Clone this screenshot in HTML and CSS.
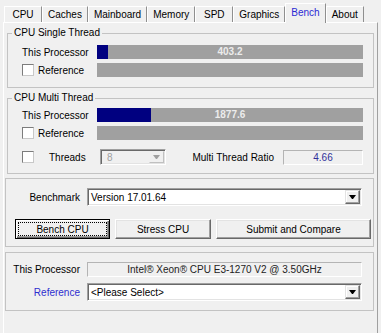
FILE: index.html
```html
<!DOCTYPE html>
<html lang="en">
  <head>
    <meta charset="UTF-8" />
    <meta name="viewport" content="width=device-width, initial-scale=1.0" />
    <title>CPU-Z Bench</title>
    <link rel="stylesheet" href="styles.css">
  </head>
  <body>
    <div class="tabs">
      <div class="tab">CPU</div>
      <div class="tab">Caches</div>
      <div class="tab">Mainboard</div>
      <div class="tab">Memory</div>
      <div class="tab">SPD</div>
      <div class="tab">Graphics</div>
      <div class="tab active">Bench</div>
      <div class="tab">About</div>
    </div>

    <div class="panel">
      <fieldset class="group">
        <legend>CPU Single Thread</legend>
        <div class="graph single">
          <span>This Processor</span>
          <div class="bar">
            <div class="fill" style="width: 4.1%"></div>
            <span class="value">403.2</span>
          </div>
          <span class="check"><span class="box"></span>Reference</span>
          <div class="bar"></div>
        </div>
      </fieldset>

      <fieldset class="group">
        <legend>CPU Multi Thread</legend>
        <div class="graph multi">
          <span>This Processor</span>
          <div class="bar">
            <div class="fill" style="width: 20.3%"></div>
            <span class="value">1877.6</span>
          </div>
          <span class="check"><span class="box"></span>Reference</span>
          <div class="bar"></div>
        </div>
        <div class="threads">
          <span class="box"></span>
          <span class="threads-label">Threads</span>
          <div class="combo disabled sunken">
            <span class="combo-text">8</span>
            <span class="drop"></span>
          </div>
          <span class="ratio-label">Multi Thread Ratio</span>
          <div class="static ratio">4.66</div>
        </div>
      </fieldset>

      <fieldset class="group wide">
        <div class="form">
          <span class="form-label">Benchmark</span>
          <div class="combo sunken">
            <span class="combo-text">Version 17.01.64</span>
            <span class="drop"></span>
          </div>
        </div>
        <div class="buttons">
          <button class="btn default bench">Bench CPU</button>
          <button class="btn stress">Stress CPU</button>
          <button class="btn submit">Submit and Compare</button>
        </div>
      </fieldset>

      <fieldset class="group wide">
        <div class="form compare">
          <span class="form-label">This Processor</span>
          <div class="static processor">Intel&reg; Xeon&reg; CPU E3-1270 V2 @ 3.50GHz</div>
          <span class="form-label link">Reference</span>
          <div class="combo sunken">
            <span class="combo-text">&lt;Please Select&gt;</span>
            <span class="drop"></span>
          </div>
        </div>
      </fieldset>
    </div>
  </body>
</html>
```

FILE: styles.css
```css
* {
  box-sizing: border-box;
}
body {
  margin: 0;
  height: 333px;
  overflow: hidden;
  background-color: #f0f0f0;
  font-family: "Liberation Sans", Arial, sans-serif;
  font-size: 10px;
  color: #000;
}
.tabs {
  display: flex;
  align-items: flex-end;
  height: 22px;
  padding-left: 4px;
}
.tab {
  height: 16px;
  min-width: 38px;
  padding: 0 5px;
  line-height: 15px;
  text-align: center;
  border-top: 1px solid #fff;
  border-left: 1px solid #fff;
  border-right: 1px solid #8f8f8f;
  background: #f0f0f0;
}
.tab.active {
  position: relative;
  height: 20px;
  margin-bottom: -1px;
  line-height: 17px;
  color: #2b2bd4;
}
.panel {
  height: 320px;
  margin: 0 3px;
  padding-top: 4px;
  border: 1px solid;
  border-color: #fff #a0a0a0 #a0a0a0 #fff;
}
.group {
  min-width: 0;
  margin: 0 3px 0 3px;
  padding: 0;
  border: 1px solid #c3c3c3;
}
.group + .group {
  margin-top: 4px;
}
.group.wide {
  margin-left: 1px;
}
.group.wide + .group.wide {
  margin-top: 5px;
}
legend {
  margin-left: 4px;
  padding: 0 2px;
  line-height: 12px;
}
.graph {
  display: grid;
  grid-template-columns: 75px 1fr;
  grid-auto-rows: 14px;
  row-gap: 4px;
  align-items: center;
  padding: 6px 10px 10px 14px;
}
.graph.multi {
  padding: 4px 10px 0 14px;
}
.bar {
  display: grid;
  height: 14px;
  background: #a0a0a0;
}
.bar > * {
  grid-area: 1 / 1;
}
.fill {
  justify-self: start;
  height: 14px;
  background: #000080;
}
.value {
  text-align: center;
  line-height: 14px;
  font-weight: bold;
  color: #ececec;
}
.check {
  display: flex;
  align-items: center;
  gap: 4px;
}
.box {
  width: 12px;
  height: 12px;
  background: #fff;
  border: 1px solid;
  border-color: #7c7c7c #c8c8c8 #c8c8c8 #7c7c7c;
}
.threads {
  display: flex;
  align-items: center;
  height: 16px;
  margin: 9px 10px 8px 14px;
}
.threads-label {
  width: 51px;
  margin-left: 15px;
}
.sunken {
  border: 1px solid;
  border-color: #a0a0a0 #fff #fff #a0a0a0;
  box-shadow: inset 1px 1px 0 #696969, inset -1px -1px 0 #e3e3e3;
}
.combo {
  display: flex;
  align-items: center;
  height: 18px;
  background: #fff;
}
.combo.disabled {
  width: 66px;
  height: 16px;
  background: #f0f0f0;
  color: #a0a0a0;
}
.combo-text {
  padding-left: 3px;
}
.combo.disabled .combo-text {
  padding-left: 6px;
}
.drop {
  display: flex;
  align-items: center;
  justify-content: center;
  align-self: stretch;
  width: 15px;
  margin: 1px 1px 1px auto;
  background: #f0f0f0;
  border: 1px solid;
  border-color: #e3e3e3 #696969 #696969 #e3e3e3;
  box-shadow: inset -1px -1px 0 #a0a0a0, inset 1px 1px 0 #fff;
}
.drop::before {
  content: "";
  width: 1px;
  border-left: 3px solid transparent;
  border-right: 3px solid transparent;
  border-top: 4px solid #000;
}
.combo.disabled .drop {
  border-color: #f0f0f0 #c0c0c0 #c0c0c0 #f0f0f0;
  box-shadow: none;
}
.combo.disabled .drop::before {
  border-top-color: #a0a0a0;
}
.ratio-label {
  margin-left: auto;
  margin-right: 9px;
}
.static {
  border: 1px solid;
  border-color: #b4b4b4 #fff #fff #b4b4b4;
  text-align: center;
}
.ratio {
  width: 80px;
  height: 15px;
  line-height: 13px;
  color: #30309a;
}
.form {
  display: grid;
  grid-template-columns: 74px 1fr;
  column-gap: 7px;
  align-items: center;
  padding: 9px 11px 0 0;
}
.form.compare {
  grid-template-rows: 15px 18px;
  row-gap: 6px;
  padding-bottom: 9px;
}
.form-label {
  text-align: right;
}
.form-label.link {
  color: #2e2ecf;
}
.processor {
  height: 15px;
  line-height: 13px;
  color: #222;
}
.buttons {
  display: flex;
  gap: 5px;
  padding: 13px 0 7px 9px;
}
.btn {
  height: 20px;
  padding: 0;
  font: inherit;
  color: #000;
  background: #f0f0f0;
  border: 1px solid;
  border-color: #fff #696969 #696969 #fff;
  box-shadow: inset -1px -1px 0 #a0a0a0, inset 1px 1px 0 #e3e3e3;
}
.btn.default {
  border-color: #000;
  box-shadow: inset 1px 1px 0 #fff, inset -1px -1px 0 #696969, inset -2px -2px 0 #a0a0a0;
  outline: 1px dotted #000;
  outline-offset: -4px;
}
.bench {
  width: 95px;
}
.stress {
  width: 96px;
}
.submit {
  width: 155px;
}
```
